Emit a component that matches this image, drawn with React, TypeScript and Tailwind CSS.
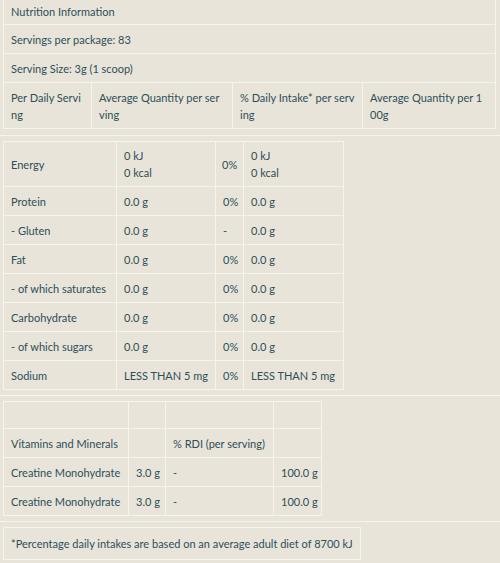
import * as React from 'react';

const cell = 'border border-[#f7f4ee] px-[7px] pt-[6px] pb-[5px] align-middle';

const nutrients: [string, string, string, string][] = [
  ['Protein', '0.0 g', '0%', '0.0 g'],
  ['- Gluten', '0.0 g', '-', '0.0 g'],
  ['Fat', '0.0 g', '0%', '0.0 g'],
  ['- of which saturates', '0.0 g', '0%', '0.0 g'],
  ['Carbohydrate', '0.0 g', '0%', '0.0 g'],
  ['- of which sugars', '0.0 g', '0%', '0.0 g'],
  ['Sodium', 'LESS THAN 5 mg', '0%', 'LESS THAN 5 mg'],
];

export default function App() {
  return (
    <div
      className="w-[500px] h-[563px] bg-[#e9e4da] text-[#2c4f58] text-[11px] leading-[17px] overflow-hidden"
      style={{ fontFamily: 'Lato, "Noto Sans", sans-serif' }}
    >
      {/* header block */}
      <div className="border-b border-[#f7f4ee] pl-[3px] pb-[6px]">
        <table className="border-collapse w-[492px] table-fixed">
          <colgroup>
            <col className="w-[88px]" />
            <col className="w-[141px]" />
            <col className="w-[130px]" />
            <col className="w-[133px]" />
          </colgroup>
          <tbody>
            <tr>
              <td colSpan={4} className="border border-t-0 border-[#f7f4ee] px-[7px] pt-[3px] pb-[4px]">
                Nutrition Information
              </td>
            </tr>
            <tr>
              <td colSpan={4} className={cell}>Servings per package: 83</td>
            </tr>
            <tr>
              <td colSpan={4} className={cell}>Serving Size: 3g (1 scoop)</td>
            </tr>
            <tr>
              <td className={`${cell} break-all`}>Per Daily Serving</td>
              <td className={`${cell} break-all`}>Average Quantity per serving</td>
              <td className={`${cell} break-all`}>% Daily Intake* per serving</td>
              <td className={`${cell} break-all`}>Average Quantity per 100g</td>
            </tr>
          </tbody>
        </table>
      </div>

      {/* nutrients */}
      <div className="border-b border-[#f7f4ee] pl-[3px] py-[5px]">
        <table className="border-collapse w-[340px] table-fixed">
          <colgroup>
            <col className="w-[113px]" />
            <col className="w-[99px]" />
            <col className="w-[28px]" />
            <col className="w-[100px]" />
          </colgroup>
          <tbody>
            <tr>
              <td className="border border-[#f7f4ee] px-[7px] pt-[5px] pb-[5px]">Energy</td>
              <td className="border border-[#f7f4ee] px-[7px] pt-[5px] pb-[5px]">
                0 kJ
                <br />0 kcal
              </td>
              <td className="border border-[#f7f4ee] px-[6px] pt-[5px] pb-[5px]">0%</td>
              <td className="border border-[#f7f4ee] px-[7px] pt-[5px] pb-[5px]">
                0 kJ
                <br />0 kcal
              </td>
            </tr>
            {nutrients.map(([name, per, pct, per100], i) => (
              <tr key={i}>
                <td className={`${cell} whitespace-nowrap`}>{name}</td>
                <td className={`${cell} whitespace-nowrap`}>{per}</td>
                <td className={`${cell} px-[6px]`}>{pct}</td>
                <td className={`${cell} whitespace-nowrap`}>{per100}</td>
              </tr>
            ))}
          </tbody>
        </table>
      </div>

      {/* vitamins */}
      <div className="border-b border-[#f7f4ee] pl-[3px] py-[5px]">
        <table className="border-collapse w-[318px] table-fixed">
          <colgroup>
            <col className="w-[125px]" />
            <col className="w-[37px]" />
            <col className="w-[108px]" />
            <col className="w-[48px]" />
          </colgroup>
          <tbody>
            <tr>
              <td className="border border-[#f7f4ee] h-[27px]"></td>
              <td className="border border-[#f7f4ee]"></td>
              <td className="border border-[#f7f4ee]"></td>
              <td className="border border-[#f7f4ee]"></td>
            </tr>
            <tr>
              <td className={`${cell} whitespace-nowrap`}>Vitamins and Minerals</td>
              <td className={cell}></td>
              <td className={`${cell} whitespace-nowrap`}>% RDI (per serving)</td>
              <td className={cell}></td>
            </tr>
            {[0, 1].map((i) => (
              <tr key={i}>
                <td className={`${cell} whitespace-nowrap`}>Creatine Monohydrate</td>
                <td className={`${cell} whitespace-nowrap px-[6px]`}>3.0 g</td>
                <td className={cell}>-</td>
                <td className={`${cell} whitespace-nowrap px-[5px]`}>100.0 g</td>
              </tr>
            ))}
          </tbody>
        </table>
      </div>

      {/* footnote */}
      <div className="flex pl-[3px] pt-[5px]">
        <div className="border border-[#f7f4ee] px-[7px] pt-[7px] pb-[7px]">
          *Percentage daily intakes are based on an average adult diet of 8700 kJ
        </div>
      </div>
    </div>
  );
}
